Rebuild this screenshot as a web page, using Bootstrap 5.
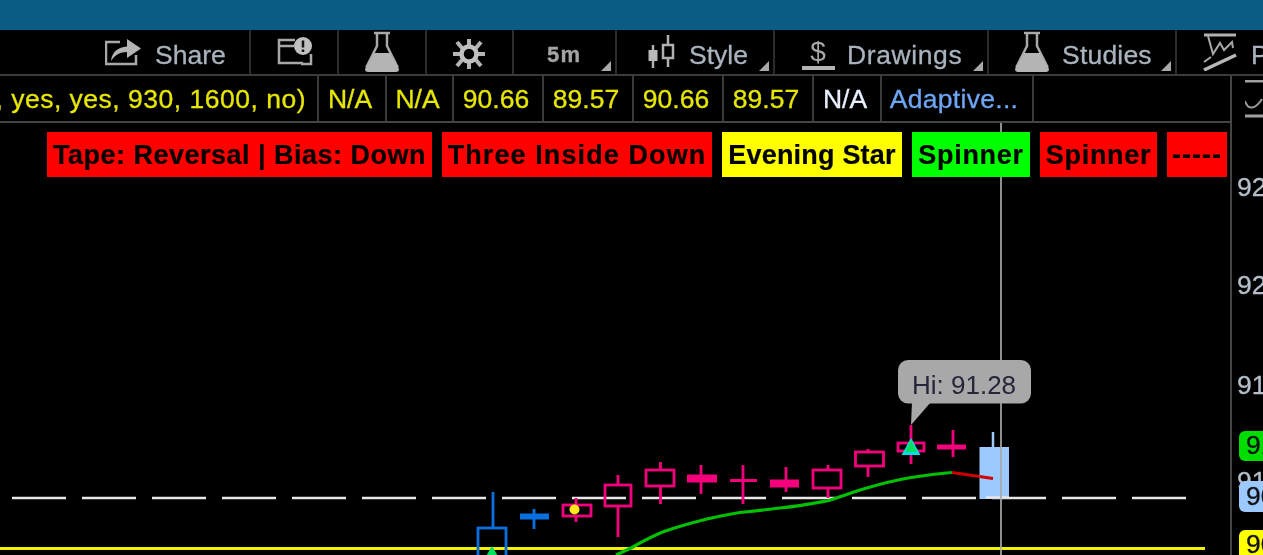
<!DOCTYPE html>
<html lang="en">
<head>
<meta charset="utf-8">
<title>Chart</title>
<link href="https://cdn.jsdelivr.net/npm/bootstrap@5.3.0/dist/css/bootstrap.min.css" rel="stylesheet">
<style>
html,body{height:100%;margin:0;background:#000;overflow:hidden}
.tos{width:1263px;height:555px;background:#000;font-family:"Liberation Sans",Arial,sans-serif;font-size:26.5px;overflow:hidden;filter:blur(.7px);-webkit-text-stroke:.3px currentColor}
.top-strip{height:30px;background:#0b5c85;flex:none}
.tool-strip{height:46px;flex:none;border-bottom:2px solid #3c3c3c}
.tool{height:100%;flex:none;border-right:2px solid #2c2c2c;color:#a9b3bd;position:relative;align-items:center}
.tool svg{display:block;flex:none}
.t-share{width:251px;padding-left:105px}
.t-cal{width:88px;padding-left:26px}
.t-flask{width:88px;padding-left:25px}
.t-gear{width:87px;padding-left:24px;padding-top:4px}
.t-time{width:103px;padding-left:33px}
.t-style{width:158px;padding-left:30px}
.t-draw{width:214px;padding-left:26px}
.t-stud{width:188px;padding-left:25px}
.t-pat{flex:1 1 auto;border-right:0;padding-left:26px;overflow:hidden;white-space:nowrap}
.lbl-gap{margin-left:14px;padding-top:7px}
.lbl-wide{letter-spacing:.6px;margin-left:12px}
.lbl-stud{margin-left:12px;letter-spacing:.2px}
.time-txt{font-size:22px;font-weight:700;letter-spacing:1.2px;color:#a4a4a4;padding-top:5px}
.corner{position:absolute;right:4px;bottom:3px;width:0;height:0;border-style:solid;border-width:0 0 10px 10px;border-color:transparent transparent #a8a8a8 transparent}
.chart-main{flex:1 1 auto;min-height:0}
.pane{width:1232px;flex:none;border-right:2px solid #444;position:relative}
.info-strip{height:47px;border-bottom:2px solid #444;position:relative;z-index:2;background:#000}
.cell{flex:none;height:100%;border-right:2px solid #3a3a3a;color:#e6e600;display:flex;align-items:center;justify-content:center;white-space:nowrap;padding:3px 4px 0 0}
.c-first{width:319px;justify-content:flex-end;padding-right:11px;overflow:hidden;letter-spacing:.5px}
.c-na{width:68px}
.c-na2{width:67px}
.c-num{width:90px}
.c-wht{color:#e8f0ff}
.c-blu{width:152px;color:#6ea6f5;letter-spacing:.3px;padding-right:6px}
.tag-strip{position:relative;z-index:1;padding:9px 0 0 47px;gap:10px}
.flag{height:45px;flex:none;font-size:27px;font-weight:700;letter-spacing:.5px;color:#000;display:flex;align-items:center;justify-content:center;white-space:nowrap;padding-top:1px;-webkit-text-stroke:.2px #000}
.flag-r{background:#f00}
.flag-y{background:#ff0}
.flag-g{background:#0f0}
.f1{width:385px}.f2{width:270px;letter-spacing:1.1px}.f3{width:180px;letter-spacing:.2px}.f4{width:118px;letter-spacing:.7px}.f5{width:117px;letter-spacing:.7px}.f6{width:60px;letter-spacing:1px}
.canvas-svg{position:absolute;left:0;top:0;width:1263px;height:555px}
.canvas-svg text{-webkit-text-stroke:.2px #26263a}
.scale-col{flex:1 1 auto;position:relative;overflow:hidden}
.px{position:absolute;left:5px;color:#b4bfca;line-height:30px;white-space:nowrap}
.pbox{position:absolute;left:7px;width:60px;border-radius:6px;color:#111;padding-left:7px;white-space:nowrap;display:flex;align-items:center}
.pb-g{background:#0d0}.pb-b{background:#9ccaff}.pb-y{background:#ff0}
.scale-ico{position:absolute;left:13px;top:4px}
</style>
</head>
<body>
<div class="tos d-flex flex-column position-relative">
  <svg class="canvas-svg" viewBox="0 0 1263 555" xmlns="http://www.w3.org/2000/svg" aria-hidden="true">
    <path d="M12 498H1187" stroke="#e8e8e8" stroke-width="2.600" stroke-dasharray="54 16" fill="none"/>
    <path d="M0 548.500H1205" stroke="#f0f000" stroke-width="3" fill="none"/>
    <path d="M616 555L631 548C645 540 655 535 664 531.500C680 526 695 522 707 519C720 516 730 514 740 512.500C755 511 768 509.500 780 508C800 506 815 503 829 500.500C840 497 850 493 860 490C880 484 895 480 911 477.500C925 475.500 940 473.500 952 472.500" stroke="#00c000" stroke-width="3.200" fill="none"/>
    <path d="M952 472.500L993 478.500" stroke="#d00000" stroke-width="3" fill="none"/>

    <g stroke="#0a70e2" stroke-width="2.800" fill="none">
      <path d="M493 492V528"/><rect x="478" y="528" width="28" height="40"/>
      <path d="M534 509V529"/>
    </g>
    <rect x="520" y="513.500" width="29" height="6" fill="#0a70e2"/>

    <g stroke="#f4007c" stroke-width="2.800" fill="none">
      <path d="M576 498V505M576 516V522"/><rect x="563" y="505" width="28" height="11"/>
      <path d="M618 475V485M618 506V537"/><rect x="605" y="485" width="26" height="21"/>
      <path d="M660.500 462V470M660.500 486V504"/><rect x="646" y="470" width="28" height="16"/>
      <path d="M701 465V494"/>
      <path d="M743 465V504M730 480.500H757"/>
      <path d="M786 467V492"/>
      <path d="M828 465V470M828 488V498"/><rect x="813" y="470" width="28" height="18"/>
      <path d="M868 449V452M868 466V477"/><rect x="855.500" y="452" width="28" height="14"/>
      <path d="M911 425V443M911 451V464"/><rect x="898" y="443" width="26" height="8"/>
      <path d="M953 430V457"/>
    </g>
    <g fill="#f4007c">
      <rect x="687" y="474.500" width="30" height="8"/>
      <rect x="770" y="479.500" width="29" height="8"/>
      <rect x="937" y="444.500" width="29" height="5"/>
    </g>
    <path d="M993 432V447" stroke="#9ccaff" stroke-width="2.500" fill="none"/>
    <rect x="979.500" y="447" width="29.500" height="52" fill="#9ccaff"/>
    <path d="M993 478.500L979.500 476.500" stroke="#d00000" stroke-width="3" fill="none"/>
    <path d="M986 497.500H1009" stroke="#e8e8e8" stroke-width="2.400" fill="none"/>
    <circle cx="574.500" cy="509.500" r="5" fill="#ffe81a"/>
    <path d="M911 438L901.500 455H920.500Z" fill="#00e0e0"/>
    <path d="M911 440L905 452H917Z" fill="#00e060"/>
    <path d="M492 546L485 558H499Z" fill="#00e060"/>

    <path d="M912 402H931L911 425Z" fill="#a8a8a8"/>
    <rect x="898" y="360" width="133" height="43.500" rx="10" fill="#a8a8a8"/>
    <text x="912" y="394" font-family="Liberation Sans, Arial, sans-serif" font-size="26" fill="#26263a">Hi: 91.28</text>
    <path d="M1001 123V555" stroke="#a8a8a8" stroke-opacity=".85" stroke-width="2" fill="none"/>
  </svg>

  <div class="top-strip position-relative"></div>

  <div class="tool-strip d-flex position-relative bg-black">
    <div class="tool d-flex t-share">
      <svg width="36" height="30" viewBox="0 0 36 30"><path d="M15 5H1V27H31V18" fill="none" stroke="#a8a8a8" stroke-width="2.500"/><path d="M6 24C7 15 13 10 22 9.500V2L36 11.500L22 21V15C15 15 10 18 6 24Z" fill="#b4b4b4"/></svg>
      <span class="lbl-gap">Share</span>
    </div>
    <div class="tool d-flex t-cal">
      <svg width="36" height="30" viewBox="0 0 36 30"><path d="M26 26H2V3H18" fill="none" stroke="#a8a8a8" stroke-width="2.500"/><path d="M2 9H17M34 17V27H24" fill="none" stroke="#a8a8a8" stroke-width="2.500"/><circle cx="26" cy="9" r="9" fill="#c0c0c0"/><path d="M26 3.500V10.500M26 12.500V15" stroke="#111" stroke-width="2.500"/></svg>
    </div>
    <div class="tool d-flex t-flask">
      <svg width="36" height="42" viewBox="0 0 36 42"><path d="M10 2H26M13 2V15L3 35H33L23 15V2" fill="none" stroke="#a8a8a8" stroke-width="2.500"/><path d="M10 22H26L35 38Q35 41 32 41H4Q1 41 1 38Z" fill="#b4b4b4"/></svg>
    </div>
    <div class="tool d-flex t-gear">
      <svg width="36" height="32" viewBox="0 0 36 32"><g stroke="#b4b4b4" stroke-width="4"><path d="M18 1V8M18 24V31M2 16H9M27 16H34M6 4L11 10M25 22L30 28M30 4L25 10M11 22L6 28"/></g><circle cx="18" cy="16" r="7.500" fill="none" stroke="#c0c0c0" stroke-width="4.500"/></svg>
    </div>
    <div class="tool d-flex t-time"><span class="time-txt">5m</span><i class="corner"></i></div>
    <div class="tool d-flex t-style">
      <svg width="28" height="36" viewBox="0 0 28 36"><path d="M6 11V34M21 1V33" stroke="#b0b0b0" stroke-width="2.500" fill="none"/><rect x="1.500" y="16" width="9" height="11" fill="#b8b8b8"/><rect x="16" y="11" width="10" height="13" fill="#000" stroke="#b0b0b0" stroke-width="2.500"/></svg>
      <span class="lbl-gap">Style</span><i class="corner"></i>
    </div>
    <div class="tool d-flex t-draw">
      <svg width="34" height="38" viewBox="0 0 34 38"><text x="17" y="28" text-anchor="middle" font-family="Liberation Sans, Arial, sans-serif" font-size="28" fill="#a8a8a8">$</text><rect x="1" y="33" width="33" height="4" fill="#b4b4b4"/></svg>
      <span class="lbl-gap lbl-wide">Drawings</span><i class="corner"></i>
    </div>
    <div class="tool d-flex t-stud">
      <svg width="36" height="42" viewBox="0 0 36 42"><path d="M10 2H26M13 2V15L3 35H33L23 15V2" fill="none" stroke="#a8a8a8" stroke-width="2.500"/><path d="M10 22H26L35 38Q35 41 32 41H4Q1 41 1 38Z" fill="#b4b4b4"/></svg>
      <span class="lbl-gap lbl-stud">Studies</span><i class="corner"></i>
    </div>
    <div class="tool d-flex t-pat">
      <svg width="34" height="38" viewBox="0 0 34 38"><path d="M1 2H33" stroke="#b0b0b0" stroke-width="3" fill="none"/><path d="M5 3L10 21L17 10L21 17L29 9L30 15" stroke="#a8a8a8" stroke-width="2" fill="none"/><path d="M1 37L33 22" stroke="#b8b8b8" stroke-width="3.500" fill="none"/><path d="M1 29L8 24" stroke="#a8a8a8" stroke-width="2" fill="none"/></svg>
      <span class="lbl-gap">P</span>
    </div>
  </div>

  <div class="chart-main d-flex">
    <div class="pane">
      <div class="info-strip d-flex">
        <div class="cell c-first">, yes, yes, 930, 1600, no)</div>
        <div class="cell c-na">N/A</div>
        <div class="cell c-na2">N/A</div>
        <div class="cell c-num">90.66</div>
        <div class="cell c-num">89.57</div>
        <div class="cell c-num">90.66</div>
        <div class="cell c-num">89.57</div>
        <div class="cell c-na c-wht">N/A</div>
        <div class="cell c-blu">Adaptive...</div>
      </div>
      <div class="tag-strip d-flex">
        <div class="flag flag-r f1">Tape: Reversal | Bias: Down</div>
        <div class="flag flag-r f2">Three Inside Down</div>
        <div class="flag flag-y f3">Evening Star</div>
        <div class="flag flag-g f4">Spinner</div>
        <div class="flag flag-r f5">Spinner</div>
        <div class="flag flag-r f6">-----</div>
      </div>
    </div>
    <div class="scale-col">
      <svg class="scale-ico" width="20" height="40" viewBox="0 0 20 40"><path d="M0 1H20M0 36H20" stroke="#a0a0a0" stroke-width="3" fill="none"/><path d="M0 21C3 30 10 30 17 19" stroke="#9a9a9a" stroke-width="2" fill="none"/></svg>
      <span class="px" style="top:96px">92</span>
      <span class="px" style="top:194px">92</span>
      <span class="px" style="top:294px">91</span>
      <span class="px" style="top:390px">91</span>
      <span class="pbox pb-g" style="top:355px;height:30px">91</span>
      <span class="pbox pb-b" style="top:405px;height:31px">90</span>
      <span class="pbox pb-y" style="top:454px;height:30px">90</span>
    </div>
  </div>
</div>
<script src="https://cdn.jsdelivr.net/npm/bootstrap@5.3.0/dist/js/bootstrap.bundle.min.js"></script>
</body>
</html>
